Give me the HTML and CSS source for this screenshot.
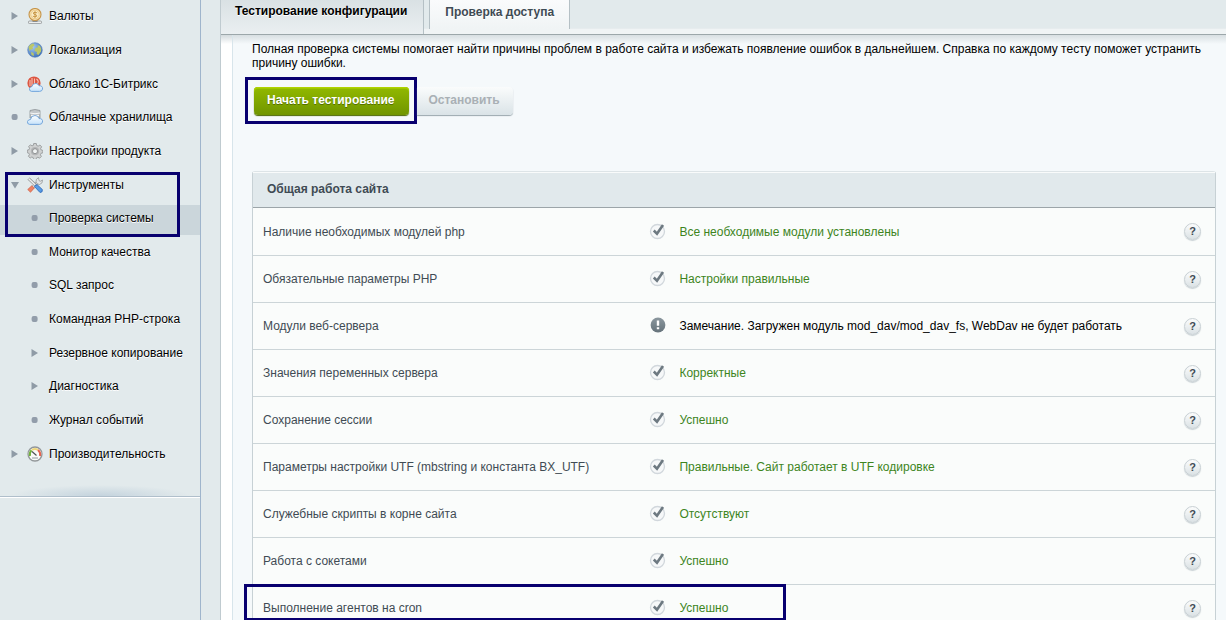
FILE: index.html
```html
<!DOCTYPE html>
<html lang="ru">
<head>
<meta charset="utf-8">
<title>Проверка системы</title>
<link rel="stylesheet" href="styles.css">
</head>
<body>
<svg class="sprite" aria-hidden="true">
  <defs>
    <linearGradient id="slate" x1="0" y1="0" x2="0" y2="1"><stop offset="0" stop-color="#8b979e"/><stop offset="1" stop-color="#66737b"/></linearGradient>
    <linearGradient id="sky" x1="0" y1="0" x2="0" y2="1"><stop offset="0" stop-color="#ffffff"/><stop offset="1" stop-color="#c5e2fa"/></linearGradient>
    <radialGradient id="ocean" cx=".35" cy=".3" r=".8"><stop offset="0" stop-color="#a4c9f0"/><stop offset="1" stop-color="#3569b4"/></radialGradient>
    <symbol id="arrow" viewBox="0 0 8 8"><path d="M.5 0L7 4L.5 8z" fill="#8f9ba6"/></symbol>
    <symbol id="arrow-down" viewBox="0 0 8 8"><path d="M0 1H8L4 7.500z" fill="#8f9ba6"/></symbol>
    <symbol id="dot" viewBox="0 0 8 8"><rect x=".6" y="1" width="6" height="6" rx="2" fill="#929daa"/></symbol>
    <symbol id="check" viewBox="0 0 18 18"><circle cx="8.500" cy="9.500" r="7" fill="#f6f8f9" stroke="#d1d7dc" stroke-width="1.300"/><path d="M4.800 8.500L8 11.800L14 3" fill="none" stroke="#6d7981" stroke-width="2.600"/></symbol>
    <symbol id="warn" viewBox="0 0 18 18"><circle cx="9" cy="9" r="7.400" fill="url(#slate)"/><path d="M7.800 4.500H10.200V9.800H7.800zM7.800 11.200H10.200V13.200H7.800z" fill="#fff"/></symbol>
    <symbol id="coin" viewBox="0 0 16 16"><rect x="1.500" y="13" width="13" height="2.600" rx="1" fill="#eceeee" stroke="#8b8f91" stroke-width=".8"/><path d="M5.500 12h5v2h-5z" fill="#888c8e"/><circle cx="8" cy="6.500" r="6" fill="#f7e3b4" stroke="#c79549" stroke-width="1.100"/><circle cx="8" cy="6.500" r="4.200" fill="#fbedc7" stroke="#e0b567" stroke-width=".6"/><path d="M10.200 4.900Q8 3.700 6.300 4.800Q6 6 8 6.500Q10.500 7.200 9.700 8.300Q8 9.300 5.800 8.200M8 3.200V9.900" fill="none" stroke="#c28d38" stroke-width=".9"/></symbol>
    <symbol id="globe" viewBox="0 0 16 16"><circle cx="8" cy="8" r="7.300" fill="url(#ocean)" stroke="#527eba" stroke-width=".6"/><path d="M1.500 5Q3.500 1.500 6.500 1.500L7.500 3.500L5.500 5L6 7L4 7.500L2.500 9zM8 6.500L11 5L10.500 3L13 4Q15 7 14 9.500L11.500 13L9.500 12L10 10L7.500 9zM4 10L6.500 11L7 14L4.500 13z" fill="#bcc768"/></symbol>
    <symbol id="bitrix" viewBox="0 0 16 16"><circle cx="7" cy="7" r="6.600" fill="#dc5642"/><path d="M3 4v6M5 2v8M7.500 2.500v6M9.500 3Q13 6 9.500 8" stroke="#f8c3b5" fill="none" stroke-width="1.100"/><path d="M4.500 15.400Q2 15 2.500 12.500Q3 10.500 5 10.500Q5.500 7.200 9 7.500Q11.200 7.700 12 9.700Q16 9.700 15.500 13.200Q15 15.400 12.500 15.400z" fill="url(#sky)" stroke="#6a9fd8" stroke-width=".9"/></symbol>
    <symbol id="storage" viewBox="0 0 16 16"><path d="M3 1.500Q8 -.5 13 1.500V9H3z" fill="#c3c7ca" stroke="#8e9497" stroke-width=".8"/><path d="M3 4Q8 5.500 13 4M4 6.500h8" stroke="#f7f8f8" fill="none"/><path d="M2.500 15.400Q0 15 .5 12.500Q1 10.500 3.500 10.500Q4 6.500 8 6.500Q11 6.500 12 9.500Q16 9.500 15.500 13Q15 15.400 12.500 15.400z" fill="url(#sky)" stroke="#6a9fd8" stroke-width=".9"/></symbol>
    <symbol id="gear" viewBox="0 0 16 16"><path d="M6.700.5h2.600l.4 2 1.500.6 1.700-1.100 1.800 1.800-1.100 1.700.6 1.500 1.700.4v2.400l-1.900.5-.6 1.500 1 1.600-1.800 1.800-1.700-1-1.400.6-.4 1.700H6.700l-.5-1.900-1.400-.6-1.600 1-1.800-1.700 1-1.700-.6-1.400L.3 9.700V7.100l1.700-.4.6-1.500-1-1.600 1.800-1.800L5 2.900l1.400-.6z" fill="#cfd1d1" stroke="#8f9293" stroke-width=".8"/><circle cx="8" cy="8.200" r="4.100" fill="#b4b6b7"/><circle cx="8" cy="8.200" r="2.500" fill="#f0f3f3" stroke="#808384" stroke-width=".8"/></symbol>
    <symbol id="tools" viewBox="0 0 16 16"><path d="M3.200 13L10 6" stroke="#929496" stroke-width="3.200"/><path d="M3.200 13L10 6" stroke="#e6e7e7" stroke-width="1.800"/><path d="M9 5Q8.500 2 11.500.7L12 3.500L13.200 4.300L15.500 3Q16 6.500 12.500 7.500L10.500 7z" fill="#e4e5e6" stroke="#8d8f91" stroke-width=".7"/><path d="M.7 12.500L4.800 8.700L7.300 11L3.500 15.300z" fill="#ee8365" stroke="#cb553d" stroke-width=".6"/><path d="M1.500 1.500L9 8.500" stroke="#8c8e90" stroke-width="3"/><path d="M1.500 1.500L8.500 8.300" stroke="#efefef" stroke-width="1.600"/><path d="M7.500 9.500Q8.500 7 10.500 8L15.300 12.500Q16 15.500 13 15.500z" fill="#589ce5" stroke="#2c66b7" stroke-width=".8"/></symbol>
    <symbol id="gauge" viewBox="0 0 16 16"><circle cx="8" cy="8" r="7" fill="#f9faf8" stroke="#929799" stroke-width="1.300"/><path d="M3 10Q2.200 6.500 4.500 4.300" stroke="#72b13c" stroke-width="2" fill="none"/><path d="M5 4Q8 2 11 4" stroke="#efd77d" stroke-width="2" fill="none"/><path d="M11 4Q14 6.500 13 10" stroke="#e66450" stroke-width="2" fill="none"/><path d="M5 5.500L9.500 9.500" stroke="#4c5052" stroke-width="1.200"/><path d="M5 11h6v2H5z" fill="#c5cacc"/></symbol>
  </defs>
</svg>

<aside class="sidebar">
  <ul class="menu">
    <li><a href="#"><svg class="mark"><use href="#arrow"/></svg><svg class="pic"><use href="#coin"/></svg>Валюты</a></li>
    <li><a href="#"><svg class="mark"><use href="#arrow"/></svg><svg class="pic"><use href="#globe"/></svg>Локализация</a></li>
    <li><a href="#"><svg class="mark"><use href="#arrow"/></svg><svg class="pic"><use href="#bitrix"/></svg>Облако 1С-Битрикс</a></li>
    <li><a href="#"><svg class="mark"><use href="#dot"/></svg><svg class="pic"><use href="#storage"/></svg>Облачные хранилища</a></li>
    <li><a href="#"><svg class="mark"><use href="#arrow"/></svg><svg class="pic"><use href="#gear"/></svg>Настройки продукта</a></li>
    <li class="framed"><a href="#"><svg class="mark"><use href="#arrow-down"/></svg><svg class="pic"><use href="#tools"/></svg>Инструменты</a></li>
    <li><a class="sub current" href="#"><svg class="mark"><use href="#dot"/></svg>Проверка системы</a></li>
    <li><a class="sub" href="#"><svg class="mark"><use href="#dot"/></svg>Монитор качества</a></li>
    <li><a class="sub" href="#"><svg class="mark"><use href="#dot"/></svg>SQL запрос</a></li>
    <li><a class="sub" href="#"><svg class="mark"><use href="#dot"/></svg>Командная PHP-строка</a></li>
    <li><a class="sub" href="#"><svg class="mark"><use href="#arrow"/></svg>Резервное копирование</a></li>
    <li><a class="sub" href="#"><svg class="mark"><use href="#arrow"/></svg>Диагностика</a></li>
    <li><a class="sub" href="#"><svg class="mark"><use href="#dot"/></svg>Журнал событий</a></li>
    <li><a href="#"><svg class="mark"><use href="#arrow"/></svg><svg class="pic"><use href="#gauge"/></svg>Производительность</a></li>
  </ul>
</aside>

<main class="main">
  <nav class="tabs">
    <button class="tab active" type="button">Тестирование конфигурации</button>
    <button class="tab" type="button">Проверка доступа</button>
  </nav>
  <div class="panel">
    <div class="content">
      <p class="intro">Полная проверка системы помогает найти причины проблем в работе сайта и избежать появление ошибок в дальнейшем. Справка по каждому тесту поможет устранить причину ошибки.</p>
      <div class="actions">
        <span class="start-wrap"><button class="btn start" type="button">Начать тестирование</button></span>
        <button class="btn stop" type="button" disabled>Остановить</button>
      </div>
      <table class="tests">
        <thead><tr><th colspan="4">Общая работа сайта</th></tr></thead>
        <tbody>
          <tr><td class="name">Наличие необходимых модулей php</td><td class="state"><svg><use href="#check"/></svg></td><td class="result">Все необходимые модули установлены</td><td class="help"><button type="button">?</button></td></tr>
          <tr><td class="name">Обязательные параметры PHP</td><td class="state"><svg><use href="#check"/></svg></td><td class="result">Настройки правильные</td><td class="help"><button type="button">?</button></td></tr>
          <tr><td class="name">Модули веб-сервера</td><td class="state"><svg><use href="#warn"/></svg></td><td class="result note">Замечание. Загружен модуль mod_dav/mod_dav_fs, WebDav не будет работать</td><td class="help"><button type="button">?</button></td></tr>
          <tr><td class="name">Значения переменных сервера</td><td class="state"><svg><use href="#check"/></svg></td><td class="result">Корректные</td><td class="help"><button type="button">?</button></td></tr>
          <tr><td class="name">Сохранение сессии</td><td class="state"><svg><use href="#check"/></svg></td><td class="result">Успешно</td><td class="help"><button type="button">?</button></td></tr>
          <tr><td class="name">Параметры настройки UTF (mbstring и константа BX_UTF)</td><td class="state"><svg><use href="#check"/></svg></td><td class="result">Правильные. Сайт работает в UTF кодировке</td><td class="help"><button type="button">?</button></td></tr>
          <tr><td class="name">Служебные скрипты в корне сайта</td><td class="state"><svg><use href="#check"/></svg></td><td class="result">Отсутствуют</td><td class="help"><button type="button">?</button></td></tr>
          <tr><td class="name">Работа с сокетами</td><td class="state"><svg><use href="#check"/></svg></td><td class="result">Успешно</td><td class="help"><button type="button">?</button></td></tr>
          <tr class="cron"><td class="name">Выполнение агентов на cron</td><td class="state"><svg><use href="#check"/></svg></td><td class="result">Успешно</td><td class="help"><button type="button">?</button></td></tr>
        </tbody>
      </table>
    </div>
  </div>
</main>
</body>
</html>
```

FILE: styles.css
```css
*, *::after { box-sizing: border-box; }

body {
  margin: 0;
  height: 100vh;
  overflow: hidden;
  display: flex;
  gap: 19px;
  background: #e2eaec;
  color: #000;
  font: 12px/14px "Liberation Sans", Arial, sans-serif;
}

button { font: inherit; padding: 0; border: 0; }

.sprite { position: absolute; width: 0; height: 0; }

/* Sidebar */
.sidebar {
  flex: 0 0 201px;
  border-right: 1px solid #9fb5cc;
}

.menu {
  list-style: none;
  margin: 0;
  padding: 1px 0 24px;
  display: grid;
  grid-auto-rows: 1fr;
  height: 497px;
  border-bottom: 1px solid #b0bfcb;
  box-shadow: 0 1px #fff;
  background: radial-gradient(ellipse 90px 11px at 50% 100%, #c4d3dd, #c4d3dd00);
}

.menu li { position: relative; display: grid; align-items: center; }

.menu a {
  display: flex;
  align-items: center;
  height: 30px;
  padding: 0 0 3px 11px;
  color: #000;
  text-decoration: none;
  text-shadow: 0 1px #fff;
}

.menu .mark { width: 8px; height: 8px; margin-right: 8px; }
.menu .pic { width: 16px; height: 16px; margin-right: 6px; }
.menu .sub { padding-left: 31px; }
.menu .sub .mark { margin-right: 10px; }
.menu .current { background: #cbd6db; }

.framed::after {
  content: "";
  position: absolute;
  z-index: 1;
  top: 3px;
  left: 5px;
  width: 175px;
  height: 65px;
  border: 3px solid #08006f;
  pointer-events: none;
}

/* Main column */
.main {
  flex: 1;
  min-width: 0;
  display: flex;
  flex-direction: column;
  border-left: 1px solid #c0cbd0;
}

.tabs {
  flex: 0 0 35px;
  display: flex;
  align-items: flex-start;
  gap: 5px;
  border-bottom: 1px solid #9ca7aa;
  background: linear-gradient(#0000 28px, #dde4e7 28px, #f0f4f5 29px);
}

.tab {
  height: 29px;
  padding: 0 15px 5px;
  border: 1px solid #b5c0c5;
  border-width: 0 1px;
  background: linear-gradient(#fafbfc, #f0f4f5);
  color: #3f4b54;
  font-weight: bold;
  text-shadow: 0 1px #fff;
}

.tab.active {
  height: 34px;
  padding: 0 16px 12px 14px;
  border-left: 0;
  background: linear-gradient(#d9e1e4, #eaeff1);
  color: #000;
}

.panel {
  flex: 1;
  min-height: 0;
  padding-left: 11px;
  background: linear-gradient(#d3dadd, #fff0 9px) #fff;
}

.content {
  height: 100%;
  padding: 7px 10px 0 19px;
  border-left: 1px solid #d8e5eb;
  background: linear-gradient(#d8dfe2, #f5f9fb00 9px) #f5f9fb;
}

.intro { margin: 0; }

.actions {
  display: flex;
  align-items: center;
  margin: 7px 0 47px -7px;
}

.start-wrap { padding: 7px 5px 6px 6px; border: 3px solid #08006f; }

.btn {
  height: 28px;
  padding: 0 14px 2px;
  border-radius: 4px;
  font-weight: bold;
}

.start {
  padding: 0 15px 2px 13px;
  background: linear-gradient(#92b900, #709500);
  box-shadow: inset 0 1px #b0d300, inset 0 2px #9fc700, 0 1px 1px #4b6700;
  color: #fff;
  text-shadow: 0 1px #557000;
}

.stop {
  padding: 0 13px 2px 11px;
  border-radius: 0 4px 4px 0;
  background: linear-gradient(#fafcfc, #dae3e7);
  box-shadow: 0 1px 1px #9ba7ad;
  color: #a9b0b5;
}

/* Test results */
.tests {
  width: 100%;
  border: 1px solid #c7d1d5;
  border-top-color: #dde4e7;
  border-radius: 3px 3px 0 0;
  border-spacing: 0;
  background: #fafcfb;
}

.tests th {
  height: 36px;
  padding: 0 14px 1px;
  border-bottom: 1px solid #9ca5a9;
  background: #e1e9ec;
  box-shadow: inset 0 1px #f9fbfb;
  color: #3f4b54;
  text-align: left;
}

.tests td { height: 47px; padding: 0; border-bottom: 1px solid #ccd5d8; }
.tests tr:first-child td { height: 48px; }
.tests .name { width: 41%; padding-left: 10px; color: #3f4b54; }
.tests .state { width: 32px; }
.tests .state svg { display: block; width: 18px; height: 18px; margin: 0 0 2px 2px; }
.tests .result { color: #3d851d; }
.tests .note { color: #000; }
.tests .help { width: 31px; }

.help button {
  display: block;
  width: 17px;
  height: 17px;
  border: 1px solid #c8d0d4;
  border-radius: 50%;
  background: linear-gradient(#fbfcfc, #dbe2e5);
  box-shadow: 0 1px 1px #c8d0d4;
  color: #3f4b54;
  font-weight: bold;
  font-size: 11px;
  line-height: 15px;
}

.cron .name { position: relative; }

.cron .name::after {
  content: "";
  position: absolute;
  z-index: 1;
  top: -1px;
  left: -9px;
  width: 542px;
  height: 37px;
  border: 3px solid #08006f;
  pointer-events: none;
}
```
